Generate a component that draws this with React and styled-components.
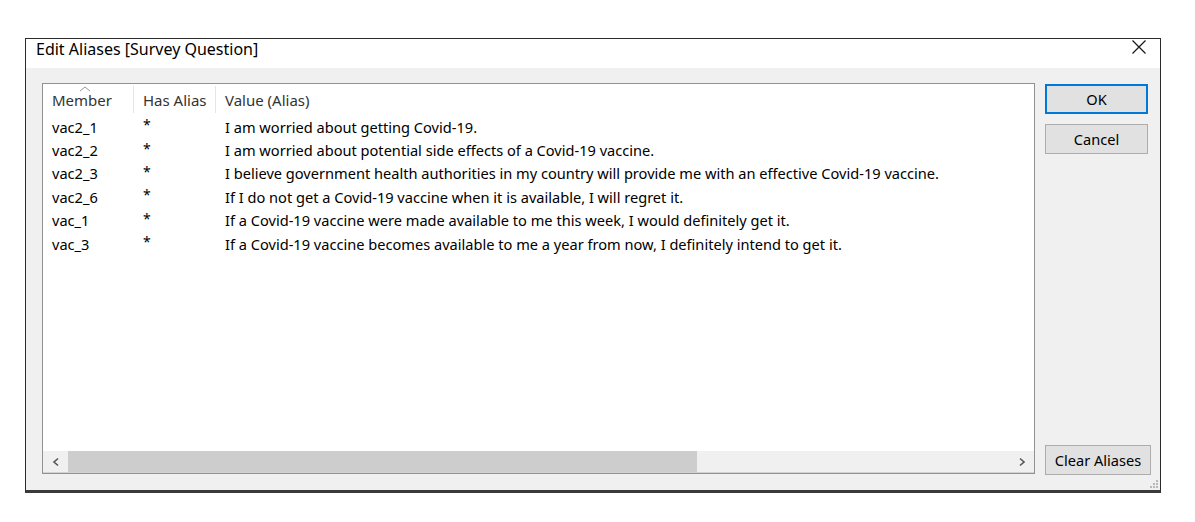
import React from "react";
import styled, { createGlobalStyle } from "styled-components";

const Global = createGlobalStyle`
  html, body { margin: 0; padding: 0; background: #ffffff; }
  body { font-family: "Noto Sans", "Open Sans", sans-serif; color: #000; }
`;

const Page = styled.div`
  width: 1195px;
  height: 522px;
  padding: 38px 0 0 25px;
  box-sizing: border-box;
`;

const Window = styled.div`
  width: 1136px;
  height: 455px;
  box-sizing: border-box;
  border: 1px solid #2b2b2b;
  border-bottom: 3px solid #3a3a3a;
  display: flex;
  flex-direction: column;
  background: #f0f0f0;
  position: relative;
`;

const TitleBar = styled.div`
  height: 29px;
  background: #ffffff;
  display: flex;
  align-items: flex-start;
  justify-content: space-between;
  padding: 0 10px 0 10px;
  font-size: 16px;
`;

const Title = styled.span`
  color: #000;
  line-height: 20px;
`;

const CloseBtn = styled.span`
  width: 22px;
  height: 22px;
  display: flex;
  align-items: center;
  justify-content: center;
  margin-top: -3px;
`;

const Body = styled.div`
  flex: 1;
  display: flex;
  padding: 15px 8px 16px 16px;
  gap: 10px;
`;

const ListBox = styled.div`
  width: 993px;
  height: 391px;
  box-sizing: border-box;
  border: 1px solid #8f9396;
  background: #ffffff;
  display: flex;
  flex-direction: column;
`;

const ListContent = styled.div`
  flex: 1;
  overflow: hidden;
`;

const Header = styled.div`
  display: grid;
  grid-template-columns: 91px 82px 1fr;
  height: 31px;
`;

const HeaderCell = styled.div`
  display: flex;
  align-items: center;
  padding-left: 9px;
  font-size: 15px;
  color: #333;
  border-right: ${(p) => (p.$sep ? "1px solid #e5e5e5" : "none")};
  margin: 2px 0;
  position: relative;
`;

const SortArrow = styled.svg`
  position: absolute;
  left: 36px;
  top: 0px;
`;

const Row = styled.div`
  display: grid;
  grid-template-columns: 91px 82px 1fr;
  height: 23.4px;
  align-items: center;
  font-size: 14.6px;
  color: #000;
  white-space: nowrap;
`;

const Cell = styled.div`
  padding-left: 9px;
`;

const Star = styled.div`
  padding-left: 9px;
  font-size: 14px;
  position: relative;
  top: -2px;
`;

const ScrollBar = styled.div`
  height: 21px;
  display: flex;
  align-items: stretch;
  background: #f0f0f0;
  border-bottom: 1px solid #d2d2d2;
`;

const Arrow = styled.div`
  width: 25px;
  display: flex;
  align-items: center;
  justify-content: center;
`;

const Track = styled.div`
  flex: 1;
  display: flex;
`;

const Thumb = styled.div`
  background: #cdcdcd;
`;

const Buttons = styled.div`
  display: flex;
  flex-direction: column;
  gap: 10px;
  width: 107px;
  padding-top: 1px;
`;

const Spacer = styled.div`
  flex: 1;
`;

const Button = styled.div`
  width: ${(p) => p.$w || 103}px;
  height: 30px;
  box-sizing: border-box;
  background: #e1e1e1;
  border: ${(p) => (p.$primary ? "2px solid #0078d7" : "1px solid #adadad")};
  display: flex;
  align-items: center;
  justify-content: center;
  font-size: 14.6px;
  color: #000;
  margin-bottom: ${(p) => p.$mb || 0}px;
`;

const Grip = styled.svg`
  position: absolute;
  right: 2px;
  bottom: 2px;
`;

const rows = [
  ["vac2_1", "I am worried about getting Covid-19."],
  ["vac2_2", "I am worried about potential side effects of a Covid-19 vaccine."],
  ["vac2_3", "I believe government health authorities in my country will provide me with an effective Covid-19 vaccine."],
  ["vac2_6", "If I do not get a Covid-19 vaccine when it is available, I will regret it."],
  ["vac_1", "If a Covid-19 vaccine were made available to me this week, I would definitely get it."],
  ["vac_3", "If a Covid-19 vaccine becomes available to me a year from now, I definitely intend to get it."],
];

export default function App() {
  return (
    <>
      <Global />
      <Page>
        <Window>
          <TitleBar>
            <Title>Edit Aliases [Survey Question]</Title>
            <CloseBtn>
              <svg width="16" height="16" viewBox="0 0 16 16">
                <path d="M1.5 1.5 L14.5 14.5 M14.5 1.5 L1.5 14.5" stroke="#1a1a1a" strokeWidth="1.3" fill="none" />
              </svg>
            </CloseBtn>
          </TitleBar>
          <Body>
            <ListBox>
              <ListContent>
                <Header>
                  <HeaderCell $sep>
                    <SortArrow width="12" height="6" viewBox="0 0 12 6">
                      <polyline points="1,5 6,1 11,5" stroke="#9a9a9a" strokeWidth="1" fill="none" />
                    </SortArrow>
                    Member
                  </HeaderCell>
                  <HeaderCell $sep>Has Alias</HeaderCell>
                  <HeaderCell>Value (Alias)</HeaderCell>
                </Header>
                {rows.map(([m, v]) => (
                  <Row key={m}>
                    <Cell>{m}</Cell>
                    <Star>*</Star>
                    <Cell>{v}</Cell>
                  </Row>
                ))}
              </ListContent>
              <ScrollBar>
                <Arrow>
                  <svg width="8" height="10" viewBox="0 0 8 10">
                    <polyline points="6,1.5 2,5 6,8.5" stroke="#555" strokeWidth="1.6" fill="none" />
                  </svg>
                </Arrow>
                <Track>
                  <Thumb style={{ width: "629px" }} />
                </Track>
                <Arrow>
                  <svg width="8" height="10" viewBox="0 0 8 10">
                    <polyline points="2,1.5 6,5 2,8.5" stroke="#555" strokeWidth="1.6" fill="none" />
                  </svg>
                </Arrow>
              </ScrollBar>
            </ListBox>
            <Buttons>
              <Button $primary>OK</Button>
              <Button>Cancel</Button>
              <Spacer />
              <Button $w={106} $mb={-1}>Clear Aliases</Button>
            </Buttons>
          </Body>
          <Grip width="8" height="8" viewBox="0 0 8 8">
            <rect x="6" y="0" width="2" height="2" fill="#b8b8b8" />
            <rect x="3" y="3" width="2" height="2" fill="#b8b8b8" />
            <rect x="6" y="3" width="2" height="2" fill="#b8b8b8" />
            <rect x="0" y="6" width="2" height="2" fill="#b8b8b8" />
            <rect x="3" y="6" width="2" height="2" fill="#b8b8b8" />
            <rect x="6" y="6" width="2" height="2" fill="#b8b8b8" />
          </Grip>
        </Window>
      </Page>
    </>
  );
}
